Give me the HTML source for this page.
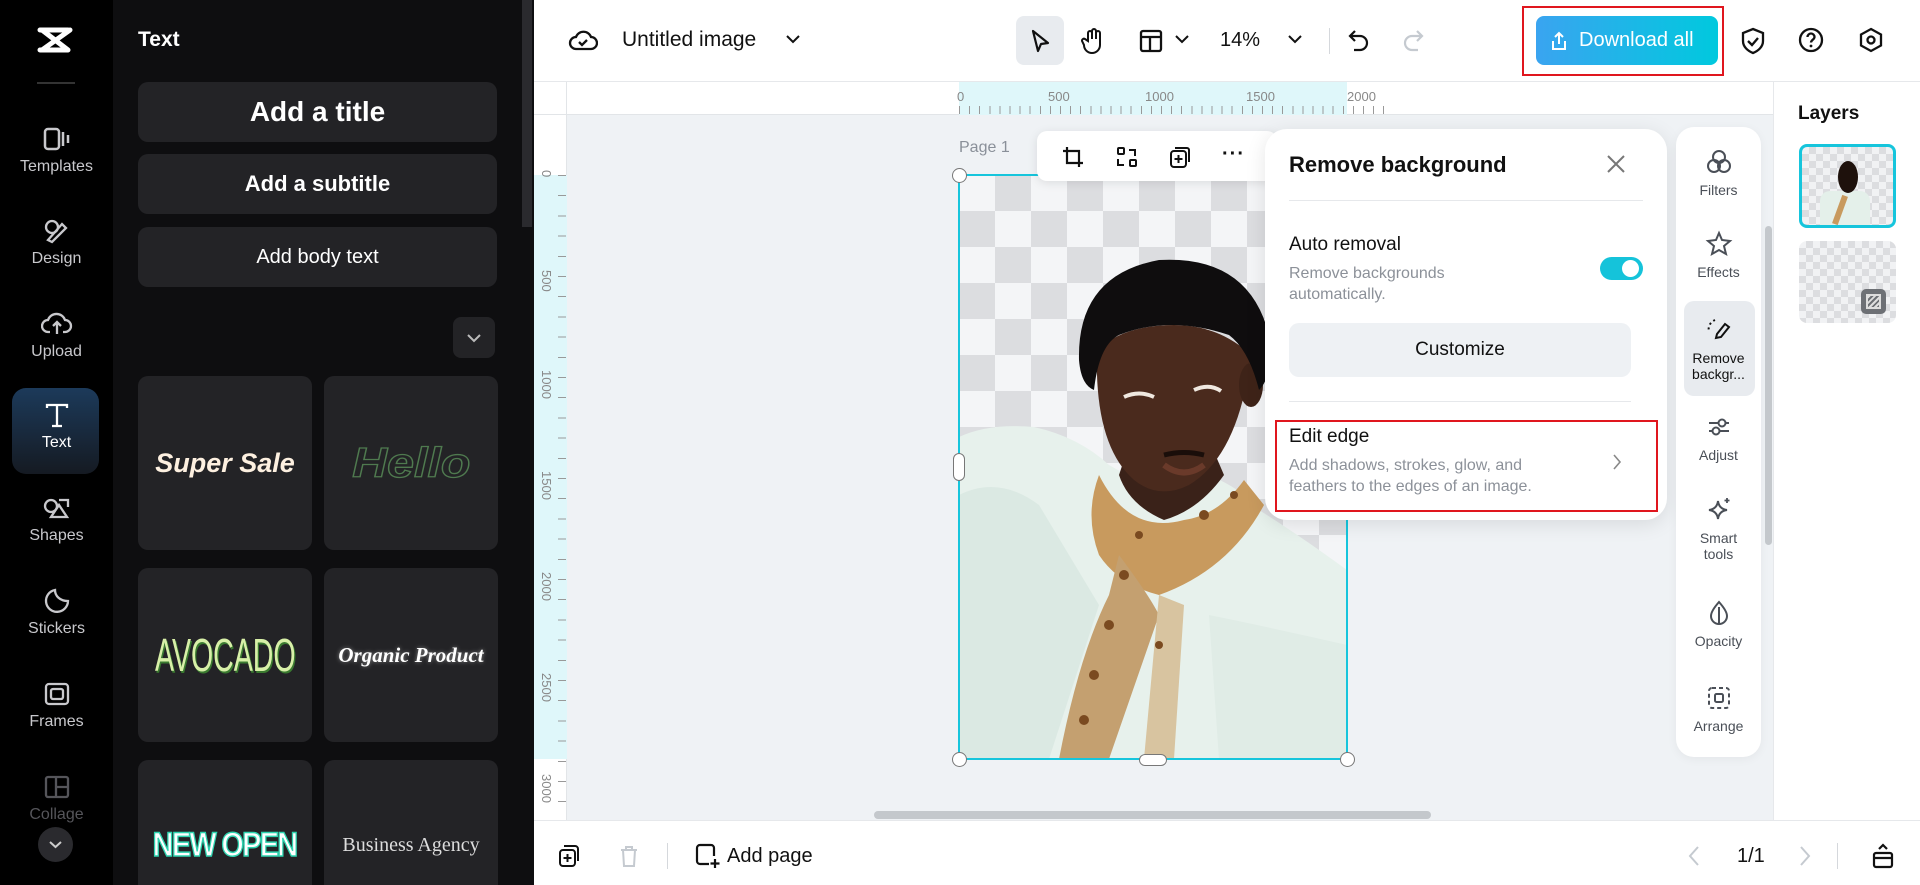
<!DOCTYPE html>
<html><head><meta charset="utf-8"><style>
*{box-sizing:border-box;margin:0;padding:0}
body{width:1920px;height:885px;overflow:hidden;font-family:"Liberation Sans",sans-serif;background:#fff;position:relative}
.a{position:absolute}
.rail{left:0;top:0;width:113px;height:885px;background:#000}
.ri{position:absolute;left:0;width:113px;text-align:center;color:#c8c8cc;font-size:16px}
.ri svg{display:block;margin:0 auto 6px}
.panel{left:113px;top:0;width:421px;height:885px;background:#0e0e10;overflow:hidden}
.btn{position:absolute;left:25px;width:359px;height:60px;background:#232326;border-radius:10px;color:#fff;text-align:center;font-weight:bold}
.card{position:absolute;width:174px;height:174px;background:#232326;border-radius:10px;display:flex;align-items:center;justify-content:center}
.ti{position:absolute;text-align:center;color:#4a4f57;font-size:14px;width:85px;left:0}
.ti svg{display:block;margin:0 auto 6px}
</style></head><body>
<div class="a rail">
 <svg class="a" style="left:36px;top:24px" width="40" height="32" viewBox="0 0 40 32"><path d="M4 6h28M4 26h28M6 6l26 20M34 6L6 26" stroke="#fff" stroke-width="5" fill="none" stroke-linecap="round"/></svg>
 <div class="a" style="left:37px;top:82px;width:38px;height:2px;background:#333"></div>
 <div class="ri" style="top:126px"><svg width="30" height="26" viewBox="0 0 30 26"><rect x="3" y="3" width="14" height="20" rx="3" stroke="#c8c8cc" stroke-width="2.5" fill="none"/><path d="M21 6v14M26 9v8" stroke="#c8c8cc" stroke-width="2.5"/></svg>Templates</div>
 <div class="ri" style="top:218px"><svg width="30" height="26" viewBox="0 0 30 26"><circle cx="10" cy="9" r="6" stroke="#c8c8cc" stroke-width="2.3" fill="none"/><path d="M6 22l14-16 4 4-14 14z" stroke="#c8c8cc" stroke-width="2.3" fill="none"/></svg>Design</div>
 <div class="ri" style="top:311px"><svg width="32" height="26" viewBox="0 0 32 26"><path d="M9 21H7a6 6 0 010-12 9 9 0 0117 0 6 6 0 010 12h-2M16 23V12M12 15l4-4 4 4" stroke="#c8c8cc" stroke-width="2.3" fill="none"/></svg>Upload</div>
 <div class="a" style="left:12px;top:388px;width:87px;height:86px;border-radius:14px;background:linear-gradient(#1c3a5a,#151a22)"></div>
 <div class="ri" style="top:402px;color:#fff"><svg width="28" height="26" viewBox="0 0 28 26"><path d="M4 6V3h20v3M14 3v21M9 24h10" stroke="#fff" stroke-width="2.3" fill="none"/></svg>Text</div>
 <div class="ri" style="top:495px"><svg width="30" height="26" viewBox="0 0 30 26"><circle cx="9" cy="11" r="6" stroke="#c8c8cc" stroke-width="2.3" fill="none"/><path d="M17 5l9 0v7M9 22l8-12 8 12z" stroke="#c8c8cc" stroke-width="2.3" fill="none"/></svg>Shapes</div>
 <div class="ri" style="top:588px"><svg width="30" height="26" viewBox="0 0 30 26"><path d="M26 13A11 11 0 1113 2c0 6 5 11 13 11z" stroke="#c8c8cc" stroke-width="2.3" fill="none"/></svg>Stickers</div>
 <div class="ri" style="top:681px"><svg width="30" height="26" viewBox="0 0 30 26"><rect x="4" y="3" width="22" height="20" rx="3" stroke="#c8c8cc" stroke-width="2.3" fill="none"/><rect x="9" y="8" width="12" height="10" rx="2" stroke="#c8c8cc" stroke-width="2.3" fill="none"/></svg>Frames</div>
 <div class="ri" style="top:774px;color:#55555a"><svg width="30" height="26" viewBox="0 0 30 26"><rect x="4" y="3" width="22" height="20" rx="2" stroke="#55555a" stroke-width="2.3" fill="none"/><path d="M14 3v20M14 13h12" stroke="#55555a" stroke-width="2.3"/></svg>Collage</div>
 <div class="a" style="left:38px;top:827px;width:35px;height:35px;border-radius:50%;background:#2a2a2e"><svg width="35" height="35" viewBox="0 0 35 35"><path d="M12 15l5.5 5 5.5-5" stroke="#ccc" stroke-width="2" fill="none"/></svg></div>
</div>
<div class="a panel">
 <div class="a" style="left:25px;top:28px;color:#fff;font-weight:bold;font-size:21px">Text</div>
 <div class="btn" style="top:82px;line-height:60px;font-size:28px">Add a title</div>
 <div class="btn" style="top:154px;line-height:60px;font-size:22px">Add a subtitle</div>
 <div class="btn" style="top:227px;line-height:60px;font-size:20px;font-weight:normal">Add body text</div>
 <div class="a" style="left:340px;top:317px;width:42px;height:41px;border-radius:8px;background:#232326"><svg width="42" height="41"><path d="M15 18l6 6 6-6" stroke="#bbb" stroke-width="2" fill="none"/></svg></div>
 <div class="card" style="left:25px;top:376px"><span style="color:#fdf0e0;font-weight:bold;font-style:italic;font-size:27px">Super Sale</span></div>
 <div class="card" style="left:211px;top:376px"><span style="color:transparent;-webkit-text-stroke:1.3px #4f7a4f;font-weight:bold;font-style:italic;font-size:42px;display:inline-block;transform:scaleX(1.15)">Hello</span></div>
 <div class="card" style="left:25px;top:568px"><span style="color:#d8f0a8;font-size:46px;transform:scaleX(.62);display:inline-block;white-space:nowrap;text-shadow:2px 2px 0 #3a7a30">AVOCADO</span></div>
 <div class="card" style="left:211px;top:568px"><span style="color:#fff;font-weight:bold;font-style:italic;font-family:'Liberation Serif',serif;font-size:21px;text-shadow:0 0 4px #888">Organic Product</span></div>
 <div class="card" style="left:25px;top:760px;height:140px"><span style="color:#fff;font-weight:bold;font-size:34px;letter-spacing:-2px;-webkit-text-stroke:1.5px #2ed4b0;transform:scaleX(.85);display:inline-block;margin-top:30px;white-space:nowrap">NEW OPEN</span></div>
 <div class="card" style="left:211px;top:760px;height:140px"><span style="color:#ddd;font-family:'Liberation Serif',serif;font-size:20px;margin-top:30px">Business Agency</span></div>
 <div class="a" style="left:409px;top:0;width:10px;height:227px;background:#2a2a2e"></div>
</div>
<div class="a" style="left:534px;top:410px;width:10px;height:75px;background:#222;border-radius:0 8px 8px 0"></div>
<div class="a" style="left:534px;top:0;width:1386px;height:82px;background:#fff;border-bottom:1px solid #e6e8eb"></div>
<svg class="a" style="left:568px;top:27px" width="30" height="26" viewBox="0 0 30 26"><path d="M8 22a6 6 0 010-12 8 8 0 0115 0 6 6 0 010 12z" stroke="#111" stroke-width="2.3" fill="none"/><path d="M11 15l3 3 5-5" stroke="#111" stroke-width="2.3" fill="none"/></svg>
<div class="a" style="left:622px;top:28px;font-size:21px;color:#111">Untitled image</div>
<svg class="a" style="left:784px;top:32px" width="18" height="14"><path d="M3 4l6 6 6-6" stroke="#111" stroke-width="2" fill="none"/></svg>
<div class="a" style="left:1016px;top:16px;width:48px;height:49px;border-radius:8px;background:#e8ebef"></div>
<svg class="a" style="left:1028px;top:28px" width="26" height="28" viewBox="0 0 26 28"><path d="M5 3l15 12-7 1-3 7z" stroke="#111" stroke-width="2.2" fill="none" stroke-linejoin="round"/></svg>
<svg class="a" style="left:1081px;top:27px" width="26" height="28" viewBox="0 0 26 28"><path d="M7 14V6a2 2 0 014 0v6V4a2 2 0 014 0v8V6a2 2 0 014 0v12a8 8 0 01-16 0l-2-4a2 2 0 013-2z" stroke="#111" stroke-width="2" fill="none"/></svg>
<svg class="a" style="left:1138px;top:28px" width="26" height="26" viewBox="0 0 26 26"><rect x="3" y="3" width="20" height="20" rx="2" stroke="#111" stroke-width="2.3" fill="none"/><path d="M3 9h20M12 9v14" stroke="#111" stroke-width="2.3"/></svg>
<svg class="a" style="left:1173px;top:32px" width="18" height="14"><path d="M3 4l6 6 6-6" stroke="#111" stroke-width="2" fill="none"/></svg>
<div class="a" style="left:1220px;top:29px;font-size:20px;color:#111">14%</div>
<svg class="a" style="left:1286px;top:32px" width="18" height="14"><path d="M3 4l6 6 6-6" stroke="#111" stroke-width="2" fill="none"/></svg>
<div class="a" style="left:1329px;top:28px;width:1px;height:26px;background:#d5d8dc"></div>
<svg class="a" style="left:1346px;top:27px" width="26" height="28" viewBox="0 0 26 28"><path d="M9 4L4 9l5 5M4 9h10a7 7 0 010 14h-6" stroke="#111" stroke-width="2.2" fill="none"/></svg>
<svg class="a" style="left:1400px;top:27px" width="26" height="28" viewBox="0 0 26 28"><path d="M17 4l5 5-5 5M22 9H12a7 7 0 000 14h6" stroke="#c5cad0" stroke-width="2.2" fill="none"/></svg>
<div class="a" style="left:1522px;top:6px;width:202px;height:70px;border:2px solid #e0161e"></div>
<div class="a" style="left:1536px;top:16px;width:182px;height:49px;border-radius:8px;background:linear-gradient(90deg,#3aa4f0,#00c9de);color:#fff;font-size:20px;line-height:49px;padding-left:43px">Download all</div>
<svg class="a" style="left:1550px;top:30px" width="18" height="22" viewBox="0 0 18 22"><path d="M9 14V3M5 7l4-4 4 4M3 11v8h12v-8" stroke="#fff" stroke-width="2" fill="none"/></svg>
<svg class="a" style="left:1739px;top:26px" width="28" height="30" viewBox="0 0 28 30"><path d="M14 3l10 4v8c0 6-5 10-10 12C9 25 4 21 4 15V7z" stroke="#111" stroke-width="2.3" fill="none"/><path d="M9 15l4 4 6-7" stroke="#111" stroke-width="2.3" fill="none"/></svg>
<svg class="a" style="left:1797px;top:26px" width="28" height="28" viewBox="0 0 28 28"><circle cx="14" cy="14" r="11" stroke="#111" stroke-width="2.3" fill="none"/><path d="M10.5 11a3.5 3.5 0 117 0c0 2.5-3.5 3-3.5 5.5" stroke="#111" stroke-width="2.3" fill="none"/><circle cx="14" cy="20" r="1.4" fill="#111"/></svg>
<svg class="a" style="left:1857px;top:26px" width="28" height="28" viewBox="0 0 28 28"><path d="M14 3l10 5.5v11L14 25 4 19.5v-11z" stroke="#111" stroke-width="2.3" fill="none"/><circle cx="14" cy="14" r="3.5" stroke="#111" stroke-width="2.3" fill="none"/></svg>
<div class="a" style="left:534px;top:82px;width:1239px;height:738px;background:#eff2f5"></div>
<div class="a" style="left:534px;top:82px;width:1239px;height:33px;background:#fff;border-bottom:1px solid #e2e5e8"></div>
<div class="a" style="left:959px;top:82px;width:388px;height:33px;background:#dff7fa"></div>
<div class="a" style="left:534px;top:115px;width:33px;height:705px;background:#fff;border-right:1px solid #e2e5e8"></div>
<div class="a" style="left:534px;top:175px;width:33px;height:584px;background:#dff7fa"></div>
<div class="a" style="left:534px;top:82px;width:33px;height:33px;background:#fff;border-right:1px solid #e2e5e8;border-bottom:1px solid #e2e5e8"></div>
<div class="a" style="left:959px;top:106px;width:430px;height:8px;background:repeating-linear-gradient(90deg,#999 0 1px,transparent 1px 10.1px)"></div>
<div class="a" style="left:957px;top:89px;font-size:13px;color:#888;width:420px"><span class="a" style="left:0">0</span><span class="a" style="left:91px">500</span><span class="a" style="left:188px">1000</span><span class="a" style="left:289px">1500</span><span class="a" style="left:390px">2000</span></div>
<div class="a" style="left:558px;top:175px;width:8px;height:640px;background:repeating-linear-gradient(180deg,#999 0 1px,transparent 1px 20.2px)"></div>
<div class="a" style="left:540px;top:170px;font-size:13px;color:#888">
 <span class="a" style="top:0;transform:rotate(90deg);transform-origin:0 0;left:14px">0</span>
 <span class="a" style="top:100px;transform:rotate(90deg);transform-origin:0 0;left:14px">500</span>
 <span class="a" style="top:200px;transform:rotate(90deg);transform-origin:0 0;left:14px">1000</span>
 <span class="a" style="top:301px;transform:rotate(90deg);transform-origin:0 0;left:14px">1500</span>
 <span class="a" style="top:402px;transform:rotate(90deg);transform-origin:0 0;left:14px">2000</span>
 <span class="a" style="top:503px;transform:rotate(90deg);transform-origin:0 0;left:14px">2500</span>
 <span class="a" style="top:604px;transform:rotate(90deg);transform-origin:0 0;left:14px">3000</span>
</div>
<div class="a" style="left:959px;top:139px;font-size:16px;color:#8a9099">Page 1</div>
<div class="a" style="left:959px;top:175px;width:388px;height:584px;overflow:hidden;background-color:#f4f5f7;background-image:linear-gradient(45deg,#dcdde0 25%,transparent 25%,transparent 75%,#dcdde0 75%),linear-gradient(45deg,#dcdde0 25%,transparent 25%,transparent 75%,#dcdde0 75%);background-size:72px 72px;background-position:0 0,36px 36px">
<svg width="388" height="584" viewBox="0 0 388 584">
 <path d="M0 262 Q30 248 75 252 Q120 262 150 290 L200 318 L250 300 Q285 315 300 335 Q340 360 388 395 V584 H0z" fill="#e7f1ec"/>
 <path d="M0 320 Q40 300 80 330 Q110 380 140 430 L90 584 H0z" fill="#dbe9e3"/>
 <path d="M250 440 Q300 450 388 470 V584 H260z" fill="#e0ece6"/>
 <path d="M170 270 Q200 300 250 265 L265 300 Q240 335 205 345 Q170 330 160 300z" fill="#3a2219"/>
 <path d="M140 300 Q170 360 225 345 Q260 340 285 305 L305 330 Q270 395 200 420 Q160 410 140 380 Q125 340 140 300z" fill="#c89a5e"/>
 <path d="M160 380 Q190 420 200 440 L150 584 H100 Q120 480 150 420z" fill="#c4a070"/>
 <path d="M200 420 L185 584 H215 L225 430z" fill="#d8c4a0"/>
 <g fill="#7a4a20"><circle cx="165" cy="400" r="5"/><circle cx="150" cy="450" r="5"/><circle cx="135" cy="500" r="5"/><circle cx="125" cy="545" r="5"/><circle cx="200" cy="470" r="4"/><circle cx="245" cy="340" r="5"/><circle cx="275" cy="320" r="4"/><circle cx="180" cy="360" r="4"/></g>
 <path d="M138 175 Q135 270 175 305 Q200 325 230 310 Q280 280 292 180 Q260 150 215 150 Q165 150 138 175z" fill="#4a2a1d"/>
 <ellipse cx="292" cy="210" rx="12" ry="22" fill="#3e2318"/>
 <path d="M120 185 Q118 100 200 85 Q290 80 310 160 Q315 200 300 215 Q290 175 270 160 Q210 140 160 160 Q140 170 135 215 Q122 210 120 185z" fill="#0f0d0e"/>
 <path d="M165 222 Q180 215 195 222 M235 215 Q250 208 262 216" stroke="#f0e8e0" stroke-width="4" fill="none"/>
 <path d="M205 280 Q225 275 245 280" stroke="#1a0e0a" stroke-width="5" fill="none"/>
 <path d="M205 290 Q225 305 245 290" stroke="#6a3a2a" stroke-width="6" fill="none"/>
</svg>
</div>
<div class="a" style="left:958px;top:174px;width:390px;height:586px;border:2px solid #16c5dc"></div>
<div class="a" style="left:952px;top:168px;width:15px;height:15px;border-radius:50%;background:#fff;border:1px solid #777"></div>
<div class="a" style="left:1340px;top:168px;width:15px;height:15px;border-radius:50%;background:#fff;border:1px solid #777"></div>
<div class="a" style="left:952px;top:752px;width:15px;height:15px;border-radius:50%;background:#fff;border:1px solid #777"></div>
<div class="a" style="left:1340px;top:752px;width:15px;height:15px;border-radius:50%;background:#fff;border:1px solid #777"></div>
<div class="a" style="left:953px;top:453px;width:12px;height:28px;border-radius:6px;background:#fff;border:1px solid #777"></div>
<div class="a" style="left:1139px;top:754px;width:28px;height:12px;border-radius:6px;background:#fff;border:1px solid #777"></div>
<div class="a" style="left:1037px;top:131px;width:240px;height:50px;background:#fff;border-radius:10px;box-shadow:0 2px 10px rgba(0,0,0,.1)"></div>
<svg class="a" style="left:1061px;top:145px" width="24" height="24" viewBox="0 0 24 24"><path d="M6 2v16h16M2 6h16v16" stroke="#111" stroke-width="2.2" fill="none"/></svg>
<svg class="a" style="left:1115px;top:145px" width="24" height="24" viewBox="0 0 24 24"><rect x="3" y="3" width="6" height="6" rx="1" stroke="#111" stroke-width="2" fill="none"/><rect x="15" y="15" width="6" height="6" rx="1" stroke="#111" stroke-width="2" fill="none"/><path d="M14 5h6v6M3 14v6h6" stroke="#111" stroke-width="2" fill="none"/></svg>
<svg class="a" style="left:1168px;top:145px" width="24" height="24" viewBox="0 0 24 24"><rect x="3" y="6" width="15" height="16" rx="3" stroke="#111" stroke-width="2" fill="none"/><path d="M7 3h12a2 2 0 012 2v12M10.5 10v8M6.5 14h8" stroke="#111" stroke-width="2" fill="none"/></svg>
<div class="a" style="left:1222px;top:143px;font-size:20px;font-weight:bold;color:#111;letter-spacing:1px">···</div>
<div class="a" style="left:1265px;top:129px;width:402px;height:391px;background:#fff;border-radius:22px;box-shadow:0 4px 20px rgba(0,0,0,.1)"></div>
<div class="a" style="left:1289px;top:152px;font-size:22px;font-weight:bold;color:#111">Remove background</div>
<svg class="a" style="left:1605px;top:153px" width="22" height="22"><path d="M3 3l16 16M19 3L3 19" stroke="#777" stroke-width="2"/></svg>
<div class="a" style="left:1289px;top:200px;width:354px;height:1px;background:#e6e8eb"></div>
<div class="a" style="left:1289px;top:234px;font-size:19px;color:#111">Auto removal</div>
<div class="a" style="left:1289px;top:263px;font-size:16px;color:#8c9199;line-height:21px">Remove backgrounds<br>automatically.</div>
<div class="a" style="left:1600px;top:257px;width:43px;height:23px;border-radius:12px;background:#15c3da"><div class="a" style="left:22px;top:3px;width:17px;height:17px;border-radius:50%;background:#fff"></div></div>
<div class="a" style="left:1289px;top:323px;width:342px;height:54px;border-radius:10px;background:#eef1f4;text-align:center;line-height:54px;font-size:19px;color:#111">Customize</div>
<div class="a" style="left:1289px;top:401px;width:342px;height:1px;background:#e6e8eb"></div>
<div class="a" style="left:1275px;top:420px;width:383px;height:92px;border:2px solid #e0161e"></div>
<div class="a" style="left:1289px;top:426px;font-size:19px;color:#111">Edit edge</div>
<div class="a" style="left:1289px;top:455px;font-size:16px;color:#8c9199;line-height:21px">Add shadows, strokes, glow, and<br>feathers to the edges of an image.</div>
<svg class="a" style="left:1610px;top:452px" width="14" height="20"><path d="M4 3l6 7-6 7" stroke="#888" stroke-width="1.6" fill="none"/></svg>
<div class="a" style="left:1676px;top:127px;width:85px;height:630px;background:#fff;border-radius:18px;box-shadow:0 2px 10px rgba(0,0,0,.05)">
 <div class="a" style="left:8px;top:174px;width:71px;height:95px;border-radius:10px;background:#e8ebef"></div>
 <div class="ti" style="top:21px"><svg width="28" height="28" viewBox="0 0 28 28"><circle cx="14" cy="9" r="6" stroke="#4a4f57" stroke-width="2" fill="none"/><circle cx="9" cy="18" r="6" stroke="#4a4f57" stroke-width="2" fill="none"/><circle cx="19" cy="18" r="6" stroke="#4a4f57" stroke-width="2" fill="none"/></svg>Filters</div>
 <div class="ti" style="top:103px"><svg width="28" height="28" viewBox="0 0 28 28"><path d="M14 3l3 7 8 1-6 5 2 8-7-4-7 4 2-8-6-5 8-1z" stroke="#4a4f57" stroke-width="2" fill="none"/></svg>Effects</div>
 <div class="ti" style="top:189px;color:#111;line-height:16px"><svg width="28" height="28" viewBox="0 0 28 28"><path d="M10 4a10 10 0 00-6 12" stroke="#111" stroke-width="2" stroke-dasharray="2 3" fill="none"/><path d="M12 18l8-10 4 3-8 10-5 1z" stroke="#111" stroke-width="2" fill="none"/></svg>Remove<br>backgr...</div>
 <div class="ti" style="top:286px"><svg width="28" height="28" viewBox="0 0 28 28"><path d="M4 10h20M4 18h20" stroke="#4a4f57" stroke-width="2"/><circle cx="17" cy="10" r="3.5" fill="#fff" stroke="#4a4f57" stroke-width="2"/><circle cx="11" cy="18" r="3.5" fill="#fff" stroke="#4a4f57" stroke-width="2"/></svg>Adjust</div>
 <div class="ti" style="top:369px;line-height:16px"><svg width="28" height="28" viewBox="0 0 28 28"><path d="M13 5q1 8 9 9-8 1-9 9-1-8-9-9 8-1 9-9z" stroke="#4a4f57" stroke-width="2" fill="none"/><path d="M22 2v5M19.5 4.5h5" stroke="#4a4f57" stroke-width="1.8"/></svg>Smart<br>tools</div>
 <div class="ti" style="top:472px"><svg width="28" height="28" viewBox="0 0 28 28"><path d="M14 3q8 9 8 14a8 8 0 01-16 0q0-5 8-14z" stroke="#4a4f57" stroke-width="2" fill="none"/><path d="M14 8v16" stroke="#4a4f57" stroke-width="2"/></svg>Opacity</div>
 <div class="ti" style="top:557px"><svg width="28" height="28" viewBox="0 0 28 28"><rect x="4" y="4" width="20" height="20" rx="3" stroke="#4a4f57" stroke-width="2" stroke-dasharray="4 3" fill="none"/><rect x="10" y="10" width="8" height="8" rx="1.5" stroke="#4a4f57" stroke-width="2" fill="none"/></svg>Arrange</div>
</div>
<div class="a" style="left:1765px;top:226px;width:7px;height:319px;border-radius:4px;background:#c4c8cc"></div>
<div class="a" style="left:874px;top:811px;width:557px;height:8px;border-radius:4px;background:#c4c8cc"></div>
<div class="a" style="left:1773px;top:82px;width:147px;height:738px;background:#fff;border-left:1px solid #e6e8eb"></div>
<div class="a" style="left:1798px;top:103px;font-size:19px;font-weight:bold;color:#111">Layers</div>
<div class="a" style="left:1799px;top:144px;width:97px;height:84px;border:3px solid #16c5dc;border-radius:8px;background-color:#f1f2f4;background-image:linear-gradient(45deg,#dcdde0 25%,transparent 25%,transparent 75%,#dcdde0 75%),linear-gradient(45deg,#dcdde0 25%,transparent 25%,transparent 75%,#dcdde0 75%);background-size:14px 14px;background-position:0 0,7px 7px;overflow:hidden">
 <div class="a" style="left:18px;top:44px;width:50px;height:40px;background:#e4f0ea;border-radius:10px 10px 0 0"></div>
 <div class="a" style="left:35px;top:48px;width:6px;height:30px;background:#c89a5e;transform:rotate(20deg)"></div>
 <div class="a" style="left:36px;top:14px;width:20px;height:32px;background:#1e110c;border-radius:50%"></div>
</div>
<div class="a" style="left:1799px;top:241px;width:97px;height:82px;border-radius:8px;background-color:#f1f2f4;background-image:linear-gradient(45deg,#dcdde0 25%,transparent 25%,transparent 75%,#dcdde0 75%),linear-gradient(45deg,#dcdde0 25%,transparent 25%,transparent 75%,#dcdde0 75%);background-size:14px 14px;background-position:0 0,7px 7px">
 <div class="a" style="left:62px;top:48px;width:25px;height:25px;border-radius:5px;background:#6d7075"><div class="a" style="left:5px;top:5px;width:15px;height:15px;border:2px solid #ddd;background:repeating-linear-gradient(135deg,#ddd 0 2px,transparent 2px 4px)"></div></div>
</div>
<div class="a" style="left:534px;top:820px;width:1386px;height:65px;background:#fff;border-top:1px solid #e6e8eb"></div>
<svg class="a" style="left:557px;top:843px" width="24" height="26" viewBox="0 0 24 26"><rect x="3" y="7" width="15" height="16" rx="3" stroke="#111" stroke-width="2" fill="none"/><path d="M7 3h11a3 3 0 013 3v12M10.5 11v8M6.5 15h8" stroke="#111" stroke-width="2" fill="none"/></svg>
<svg class="a" style="left:617px;top:843px" width="24" height="26" viewBox="0 0 24 26"><path d="M4 7h16M9 7V4h6v3M6 7l1 16h10l1-16" stroke="#c5cad0" stroke-width="2" fill="none"/></svg>
<div class="a" style="left:667px;top:843px;width:1px;height:26px;background:#d5d8dc"></div>
<svg class="a" style="left:694px;top:842px" width="28" height="28" viewBox="0 0 28 28"><path d="M15 22H6a3 3 0 01-3-3V6a3 3 0 013-3h11a3 3 0 013 3v8" stroke="#111" stroke-width="2.2" fill="none"/><path d="M21 17v9M16.5 21.5h9" stroke="#111" stroke-width="2.2"/></svg>
<div class="a" style="left:727px;top:845px;font-size:20px;color:#111">Add page</div>
<svg class="a" style="left:1686px;top:844px" width="16" height="24"><path d="M12 3L4 12l8 9" stroke="#c5cad0" stroke-width="2" fill="none"/></svg>
<div class="a" style="left:1737px;top:845px;font-size:20px;color:#111">1/1</div>
<svg class="a" style="left:1797px;top:844px" width="16" height="24"><path d="M4 3l8 9-8 9" stroke="#c5cad0" stroke-width="2" fill="none"/></svg>
<div class="a" style="left:1837px;top:843px;width:1px;height:26px;background:#d5d8dc"></div>
<svg class="a" style="left:1870px;top:842px" width="26" height="28" viewBox="0 0 26 28"><rect x="4" y="11" width="18" height="14" rx="2" stroke="#111" stroke-width="2.2" fill="none"/><path d="M4 16h18M9 7l4-4 4 4" stroke="#111" stroke-width="2.2" fill="none"/></svg>
</body></html>
